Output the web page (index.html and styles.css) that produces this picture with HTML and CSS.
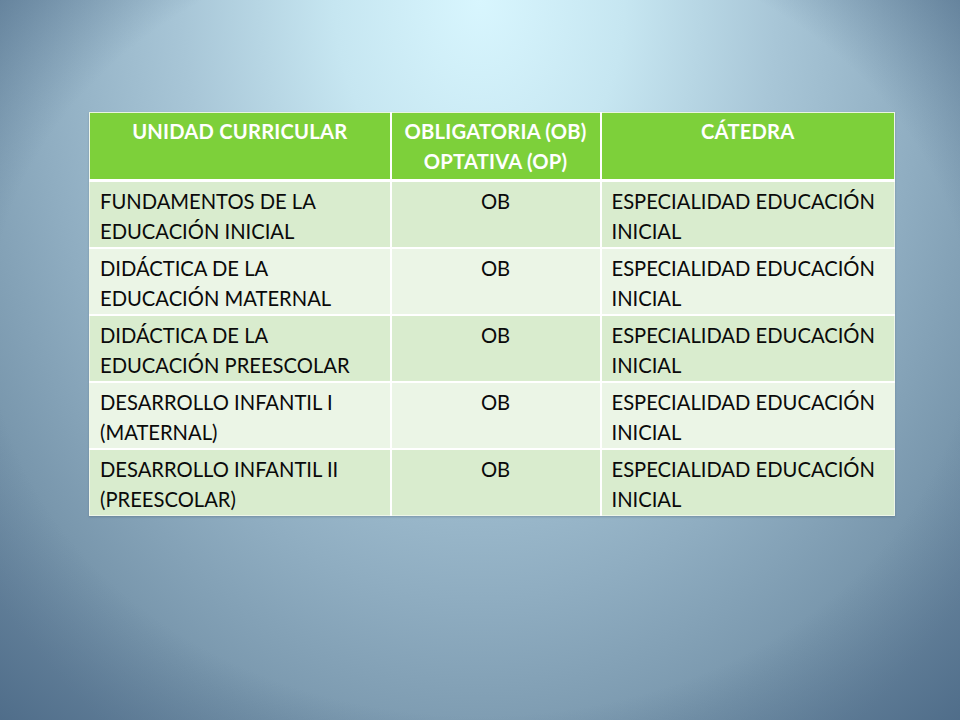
FILE: index.html
```html
<!DOCTYPE html>
<html lang="es">
<head>
<meta charset="utf-8">
<title>Unidades curriculares</title>
<link rel="stylesheet" href="styles.css">
</head>
<body>
<main class="slide">
  <table class="grid">
    <colgroup>
      <col class="c1"><col class="c2"><col class="c3">
    </colgroup>
    <thead>
      <tr>
        <th>UNIDAD CURRICULAR</th>
        <th>OBLIGATORIA (OB) OPTATIVA (OP)</th>
        <th>CÁTEDRA</th>
      </tr>
    </thead>
    <tbody>
      <tr class="odd">
        <td>FUNDAMENTOS DE LA EDUCACIÓN INICIAL</td>
        <td class="mid">OB</td>
        <td>ESPECIALIDAD EDUCACIÓN INICIAL</td>
      </tr>
      <tr class="even">
        <td>DIDÁCTICA DE LA EDUCACIÓN MATERNAL</td>
        <td class="mid">OB</td>
        <td>ESPECIALIDAD EDUCACIÓN INICIAL</td>
      </tr>
      <tr class="odd">
        <td>DIDÁCTICA DE LA EDUCACIÓN PREESCOLAR</td>
        <td class="mid">OB</td>
        <td>ESPECIALIDAD EDUCACIÓN INICIAL</td>
      </tr>
      <tr class="even">
        <td>DESARROLLO INFANTIL I (MATERNAL)</td>
        <td class="mid">OB</td>
        <td>ESPECIALIDAD EDUCACIÓN INICIAL</td>
      </tr>
      <tr class="odd">
        <td>DESARROLLO INFANTIL II (PREESCOLAR)</td>
        <td class="mid">OB</td>
        <td>ESPECIALIDAD EDUCACIÓN INICIAL</td>
      </tr>
    </tbody>
  </table>
</main>
</body>
</html>
```
FILE: styles.css
```css
html, body {
  margin: 0;
  padding: 0;
  width: 960px;
  height: 720px;
  overflow: hidden;
}
body {
  background:
    radial-gradient(ellipse 660px 880px at 50% 0%,
      #d8f6fe 0%,
      #c6e6f1 22%,
      #a8c6d7 45%,
      #8fadc1 68%,
      #7896ac 88%,
      #6e8ba3 100%),
    #6a87a0;
  font-family: Lato, "Open Sans", sans-serif;
}
.slide {
  box-sizing: border-box;
  width: 960px;
  height: 720px;
  padding: 112px 0 0 89px;
  display: flex;
  align-items: flex-start;
  background: radial-gradient(ellipse 700px 560px at 50% 45%,
      rgba(70,100,130,0) 70%, rgba(70,100,130,0.8) 100%);
}
.grid {
  width: 805px;
  border-collapse: collapse;
  table-layout: fixed;
  box-shadow: 0 1px 2px rgba(40,60,80,0.25);
}
.c1 { width: 301px; }
.c2 { width: 210px; }
.c3 { width: 294px; }
th, td {
  font-size: 20.2px;
  line-height: 29.6px;
  padding: 5px 10px 0 10px;
  vertical-align: top;
  border: 2px solid #ffffff;
  color: #0a0a0a;
  font-weight: 400;
  text-align: left;
}
thead th {
  background: #7dd03a;
  color: #ffffff;
  font-weight: 700;
  text-align: center;
  height: 62px;
  letter-spacing: 0.2px;
  border-top: 1px solid #e9f5df;
  border-bottom: 3px solid #ffffff;
  padding: 4px 4px 0 4px;
}
th:first-child, td:first-child { border-left: 1px solid #eef6e8; }
th:last-child, td:last-child { border-right: 1px solid #eef6e8; }
tbody tr:last-child td { border-bottom: 1px solid #eef6e8; }
tbody td { height: 60px; }
.odd td { background: #d9ecce; }
.even td { background: #ebf5e6; }
td.mid { text-align: center; }
```
